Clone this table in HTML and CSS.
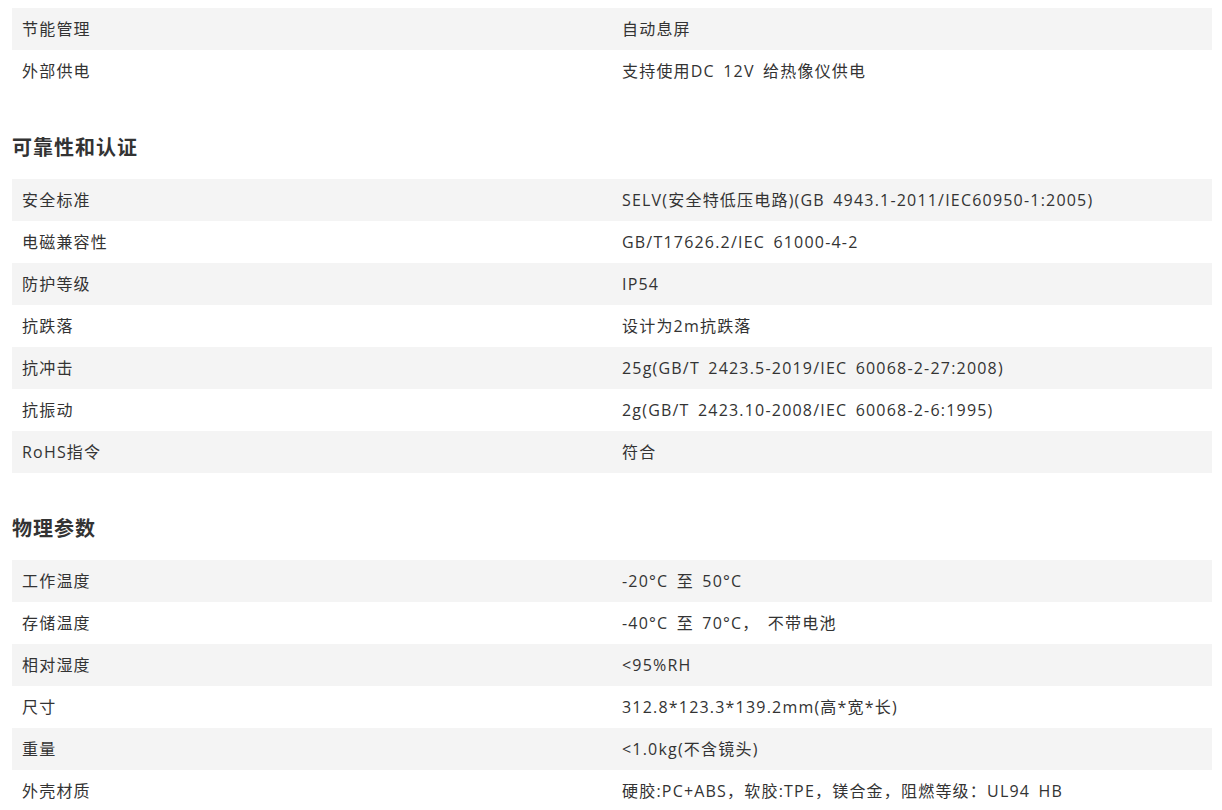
FILE: index.html
```html
<!DOCTYPE html>
<html lang="zh-CN">
<head>
<meta charset="utf-8">
<link rel="stylesheet" href="styles.css">
</head>
<body>
<div class="page">
  <table class="spec">
    <tr><td>节能管理</td><td>自动息屏</td></tr>
    <tr><td>外部供电</td><td>支持使用DC 12V 给热像仪供电</td></tr>
  </table>
  <h3 class="title">可靠性和认证</h3>
  <table class="spec">
    <tr><td>安全标准</td><td>SELV(安全特低压电路)(GB 4943.1-2011/IEC60950-1:2005)</td></tr>
    <tr><td>电磁兼容性</td><td>GB/T17626.2/IEC 61000-4-2</td></tr>
    <tr><td>防护等级</td><td>IP54</td></tr>
    <tr><td>抗跌落</td><td>设计为2m抗跌落</td></tr>
    <tr><td>抗冲击</td><td>25g(GB/T 2423.5-2019/IEC 60068-2-27:2008)</td></tr>
    <tr><td>抗振动</td><td>2g(GB/T 2423.10-2008/IEC 60068-2-6:1995)</td></tr>
    <tr><td>RoHS指令</td><td>符合</td></tr>
  </table>
  <h3 class="title">物理参数</h3>
  <table class="spec">
    <tr><td>工作温度</td><td>-20°C 至 50°C</td></tr>
    <tr><td>存储温度</td><td>-40°C 至 70°C， 不带电池</td></tr>
    <tr><td>相对湿度</td><td>&lt;95%RH</td></tr>
    <tr><td>尺寸</td><td>312.8*123.3*139.2mm(高*宽*长)</td></tr>
    <tr><td>重量</td><td>&lt;1.0kg(不含镜头)</td></tr>
    <tr><td>外壳材质</td><td>硬胶:PC+ABS，软胶:TPE，镁合金，阻燃等级：UL94 HB</td></tr>
  </table>
</div>
</body>
</html>
```

FILE: styles.css
```css
html, body {
  margin: 0;
  padding: 0;
  background: #fff;
}
body {
  padding: 8px 10px 0 12px;
  font-family: "Open Sans", "Noto Sans CJK SC", sans-serif;
  color: #333;
}
.page {
  width: 1200px;
}
.spec {
  width: 1200px;
  border-collapse: collapse;
  table-layout: fixed;
}
.spec tr {
  height: 42px;
}
.spec tr:nth-child(odd) {
  background: #f4f4f4;
}
.spec td {
  padding: 0 10px;
  font-size: 16px;
  line-height: 42px;
  height: 42px;
  vertical-align: middle;
  white-space: pre;
  letter-spacing: 1.2px;
  word-spacing: 3px;
}
.title {
  margin: 40px 0 17px;
  font-family: "Noto Sans CJK SC", sans-serif;
  font-size: 20px;
  line-height: 30px;
  font-weight: bold;
  letter-spacing: 1px;
  color: #333;
}
```
